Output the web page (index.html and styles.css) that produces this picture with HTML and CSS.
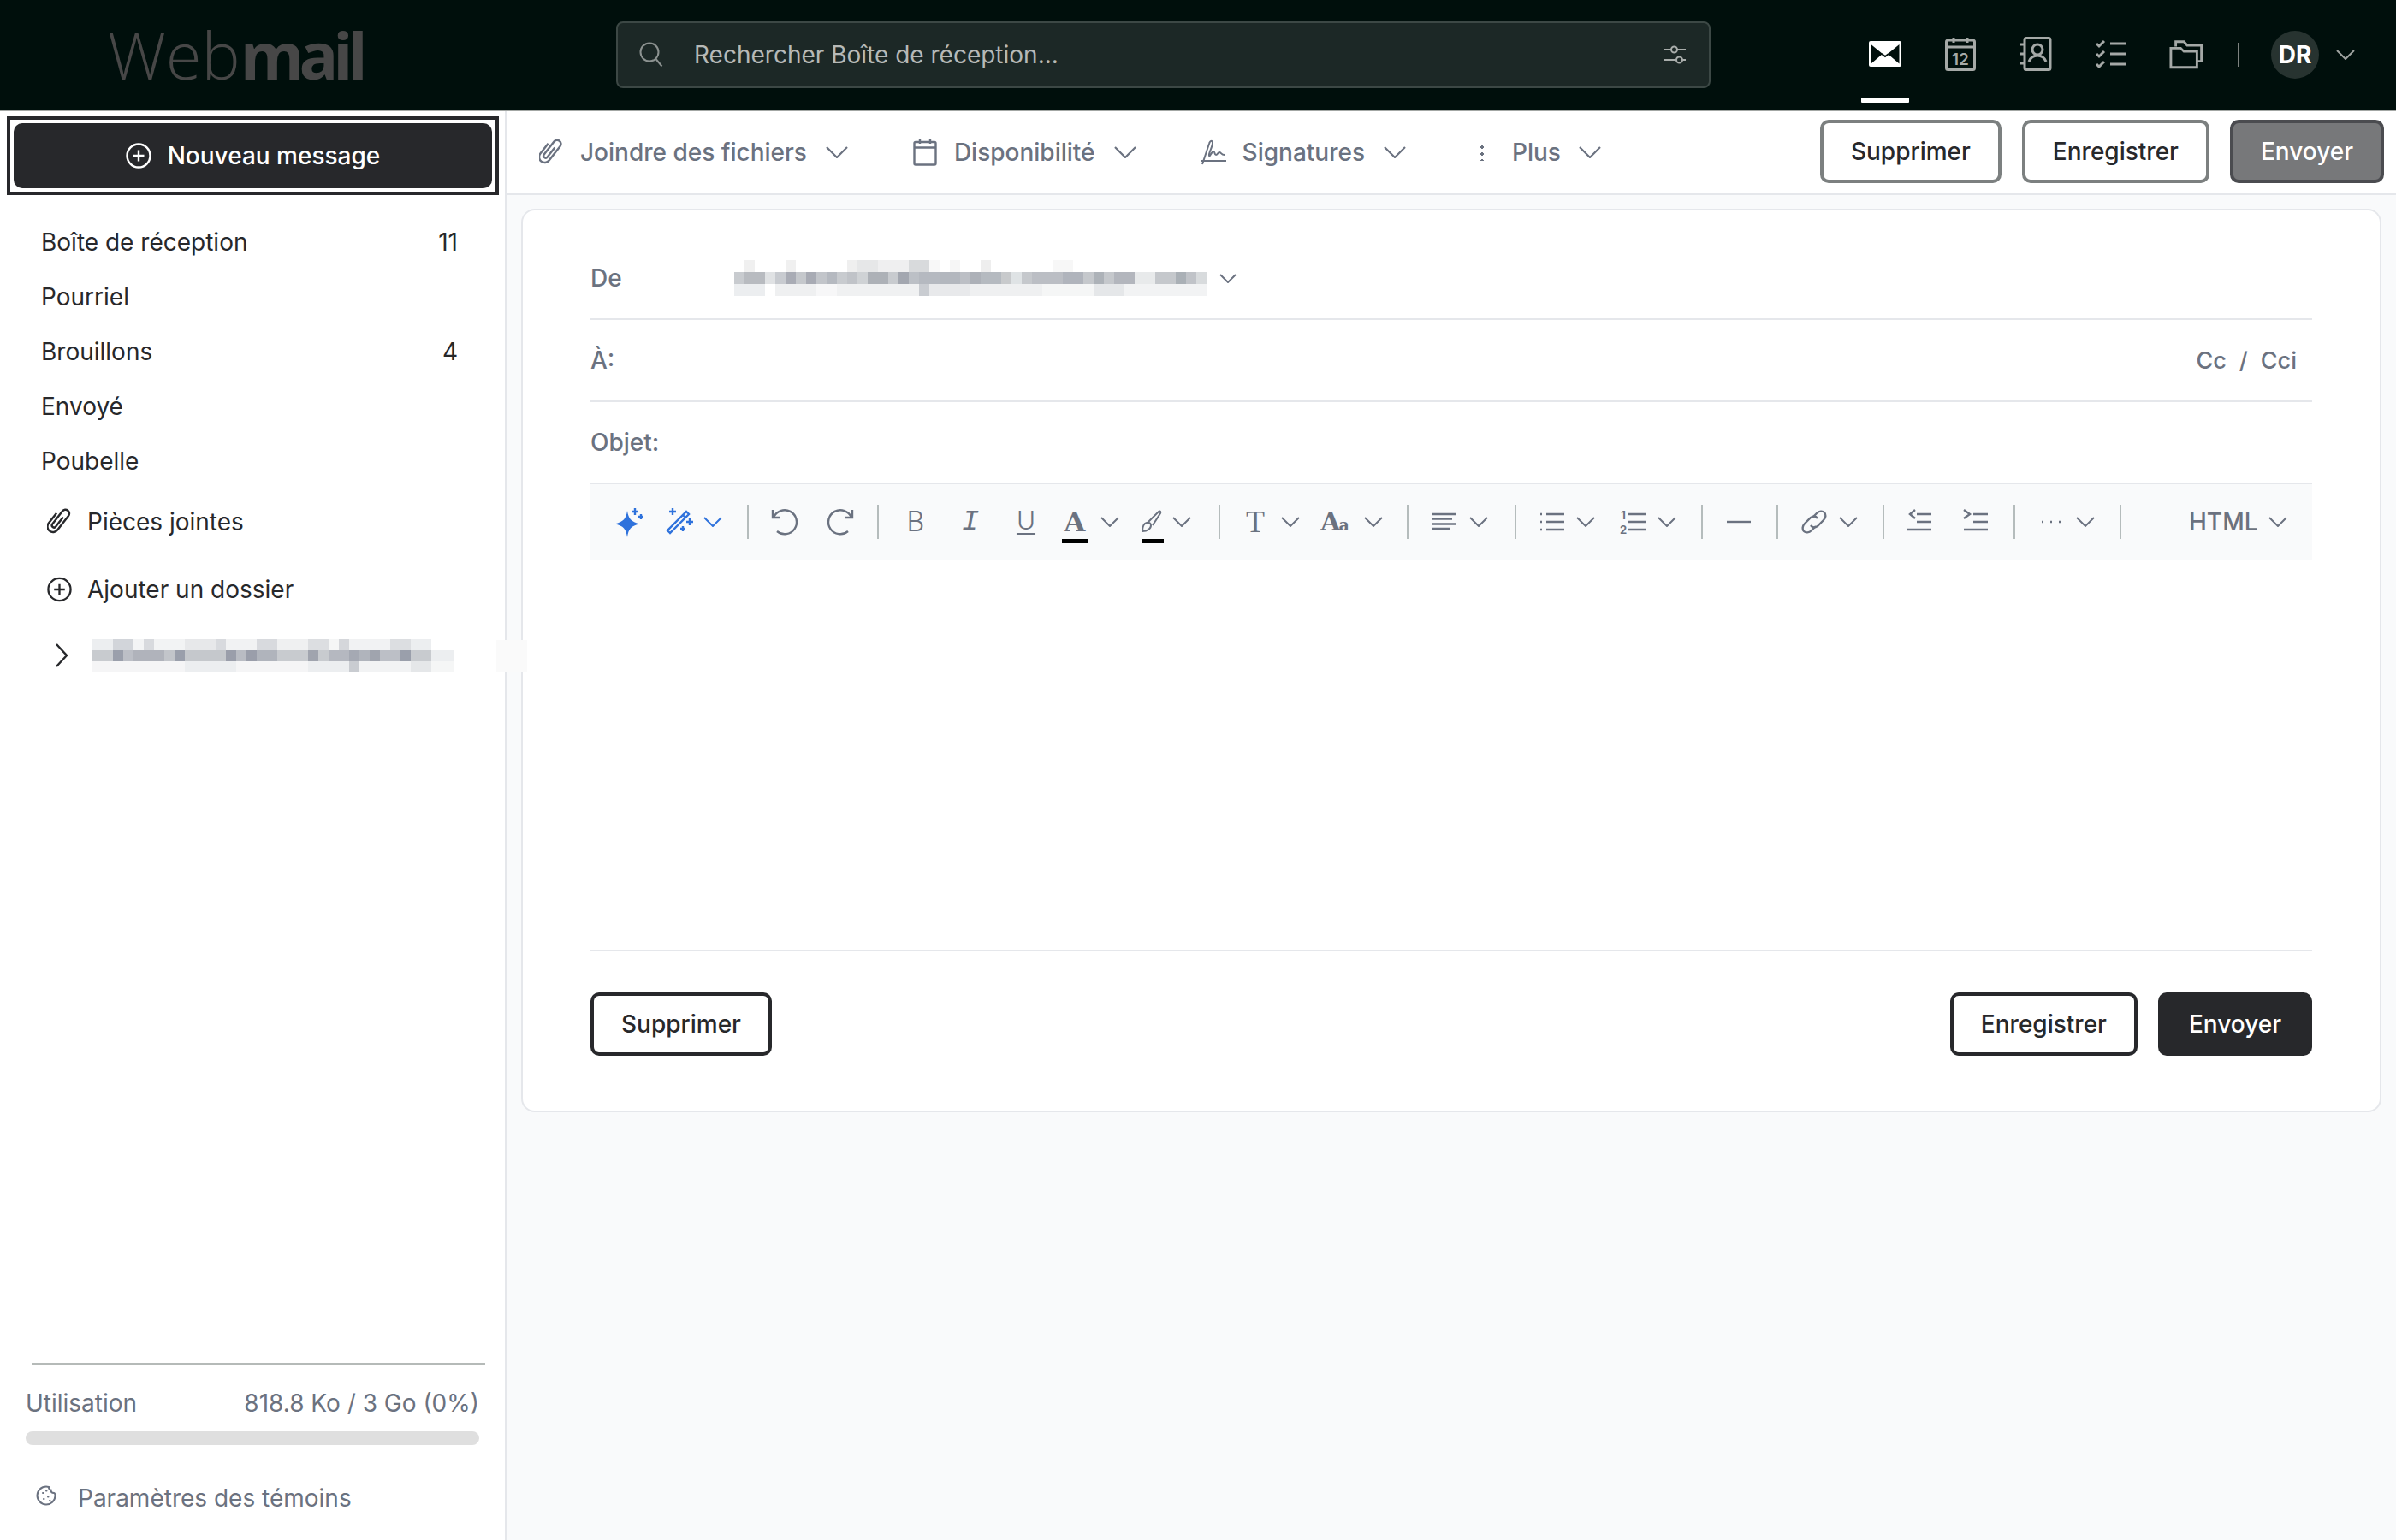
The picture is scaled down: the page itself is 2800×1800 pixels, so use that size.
FILE: index.html
```html
<!DOCTYPE html>
<html lang="fr">
<head>
  <meta charset="UTF-8">
  <meta name="viewport" content="width=device-width, initial-scale=1.0">
  <title>Webmail</title>
  <link rel="stylesheet" href="styles.css">
</head>
<body>
  <!-- Barre du haut -->
  <header class="topbar">
    <div class="logo">Web<b>mail</b></div>
    <div class="search">
      <svg class="search-ico" width="30" height="30" viewBox="0 0 30 30"><circle cx="13" cy="12" r="10.500"/><path d="M20.500 20l7 8.500"/></svg>
      <span class="search-text">Rechercher Boîte de réception...</span>
      <svg class="filter-ico" width="28" height="24" viewBox="0 0 28 24"><path d="M1 6h9M17 6h10M1 18h15M23 18h4"/><circle cx="13.500" cy="6" r="3.500"/><circle cx="19.500" cy="18" r="3.500"/></svg>
    </div>
    <nav class="apps">
      <div class="app app-active">
        <svg width="38" height="30" viewBox="0 0 38 30"><rect width="38" height="30" rx="2" fill="#fff"/><path d="M2.500 4L16 15 2.500 26.500zM35.500 4L22 15l13.500 11.500z" fill="#000f0c"/><path d="M15 15l4 3 4-3" fill="none" stroke="#000f0c" stroke-width="2"/></svg>
      </div>
      <div class="app">
        <svg width="36" height="40" viewBox="0 0 36 40"><rect x="1.500" y="4" width="33" height="34.500" rx="2"/><path d="M1.500 12h33M10 1v6M26 1v6"/><text x="18" y="33" text-anchor="middle" class="cal-num">12</text></svg>
      </div>
      <div class="app">
        <svg width="38" height="40" viewBox="0 0 38 40"><rect x="6" y="1.500" width="30" height="37" rx="2"/><path d="M1 9h6M1 20h6M1 31h6"/><circle cx="21" cy="15" r="6"/><path d="M11 29c2-5 6-7 10-7s8 2 10 7"/></svg>
      </div>
      <div class="app">
        <svg width="36" height="34" viewBox="0 0 36 34"><path d="M1 5l3 3 6-6M1 17l3 3 6-6M1 29l3 3 6-6M17 5h19M17 17h19M17 29h19"/></svg>
      </div>
      <div class="app">
        <svg width="40" height="36" viewBox="0 0 42 36"><path d="M34 27h5.500V7.500H22L18 3H8v6"/><path d="M2 11h12l4 4h16v19.500H2z"/></svg>
      </div>
    </nav>
    <span class="top-sep"></span>
    <div class="avatar">DR</div>
    <svg class="chev chev-top" width="22" height="12" viewBox="0 0 22 12"><path d="M1 1l10 10L21 1"/></svg>
  </header>

  <div class="layout">
    <!-- Colonne de gauche -->
    <aside class="sidebar">
      <div class="compose-frame">
        <button class="compose">
          <svg class="ico" width="30" height="30" viewBox="0 0 30 30"><circle cx="15" cy="15" r="13.500"/><path d="M15 8.500v13M8.500 15h13"/></svg>
          Nouveau message
        </button>
      </div>
      <ul class="folders">
        <li class="folder"><span>Boîte de réception</span><span>11</span></li>
        <li class="folder"><span>Pourriel</span></li>
        <li class="folder"><span>Brouillons</span><span>4</span></li>
        <li class="folder"><span>Envoyé</span></li>
        <li class="folder"><span>Poubelle</span></li>
      </ul>
      <div class="side-link">
        <svg class="ico" width="29" height="36" viewBox="0 0 28 36"><path transform="rotate(38 14 18)" d="M14 11v14a2.500 2.500 0 0 1-5 0V6a4.500 4.500 0 0 1 9 0v21a6.500 6.500 0 0 1-13 0V12"/></svg>
        <span>Pièces jointes</span>
      </div>
      <div class="side-link side-link-add">
        <svg class="ico" width="29" height="30" viewBox="0 0 30 30"><circle cx="15" cy="15" r="13.500"/><path d="M15 8.500v13M8.500 15h13"/></svg>
        <span>Ajouter un dossier</span>
      </div>
      <div class="account">
        <svg class="ico" width="16" height="28" viewBox="0 0 16 28"><path d="M2 1l12 13L2 27"/></svg>
        <span class="mosaic mosaic-account"></span>
        <span class="mosaic-tail"></span>
      </div>

      <div class="side-foot">
        <div class="foot-line"></div>
        <div class="usage"><span>Utilisation</span><span>818.8 Ko / 3 Go (0%)</span></div>
        <div class="usage-bar"></div>
        <div class="cookies">
          <svg class="ico ico-cookie" width="24" height="24" viewBox="0 0 24 24"><path d="M12 1.500c1 0 2 .2 3 .5-.3 2 1 3.500 2.500 3.500 0 2 1.500 3.500 3.500 3.500.8 0 1.500 1 1.500 3.500A10.500 10.500 0 1 1 12 1.500z"/><path d="M8 9h.5M9 16h.5M14 13.500h.5M16 18h.5M12 6.500h.5"/></svg>
          <span>Paramètres des témoins</span>
        </div>
      </div>
    </aside>

    <!-- Contenu -->
    <main class="main">
      <div class="actions">
        <div class="action action-first">
          <svg class="ico" width="28" height="36" viewBox="0 0 28 36"><path transform="rotate(38 14 18)" d="M14 11v14a2.500 2.500 0 0 1-5 0V6a4.500 4.500 0 0 1 9 0v21a6.500 6.500 0 0 1-13 0V12"/></svg>
          <span>Joindre des fichiers</span>
          <svg class="chev chev-action" width="26" height="14" viewBox="0 0 26 14"><path d="M1 1l12 12L25 1"/></svg>
        </div>
        <div class="action">
          <svg class="ico" width="28" height="32" viewBox="0 0 28 32"><rect x="1.500" y="4" width="25" height="26.500" rx="1.500"/><path d="M1.500 10.500h25M8 1v5M20 1v5"/></svg>
          <span>Disponibilité</span>
          <svg class="chev chev-action" width="26" height="14" viewBox="0 0 26 14"><path d="M1 1l12 12L25 1"/></svg>
        </div>
        <div class="action action-sign">
          <svg class="ico ico-sign" width="32" height="30" viewBox="0 0 32 30"><path d="M1 25h30M3 29c3-9 6-18 8-24 1-4 4-4 4-1 0 5-5 12-4 15 .7 2 3-5 5-5s1 4 3 4 2-3 4-3 2 3 6 3"/></svg>
          <span>Signatures</span>
          <svg class="chev chev-action" width="26" height="14" viewBox="0 0 26 14"><path d="M1 1l12 12L25 1"/></svg>
        </div>
        <div class="action action-more">
          <span class="kebab"></span>
          <span>Plus</span>
          <svg class="chev chev-action" width="26" height="14" viewBox="0 0 26 14"><path d="M1 1l12 12L25 1"/></svg>
        </div>
        <div class="action-btns">
          <button class="btn btn-off">Supprimer</button>
          <button class="btn btn-off">Enregistrer</button>
          <button class="btn btn-send-off">Envoyer</button>
        </div>
      </div>

      <section class="card">
        <div class="row">
          <label class="row-label row-label-from">De</label>
          <span class="mosaic mosaic-from"></span>
          <svg class="chev chev-from" width="20" height="11" viewBox="0 0 20 11"><path d="M1 1l9 9 9-9"/></svg>
        </div>
        <div class="row">
          <label class="row-label">À:</label>
          <span class="cc">Cc<i>/</i>Cci</span>
        </div>
        <div class="row row-last">
          <label class="row-label">Objet:</label>
        </div>

        <!-- Barre de l'éditeur -->
        <div class="editor-bar">
          <svg class="tool ml-25 blue-fill" width="40" height="40" viewBox="0 0 40 40"><path d="M18 7c1.500 9 4 13 15 15.500-11 2-13.500 6-15 15.500-1.500-9.500-4-13.500-15-15.500C14 20 16.500 16 18 7z"/><path class="blue-line" d="M27 4v8M23 8h8M34 11v6M31 14h6"/></svg>
          <svg class="tool ml-20 blue-line" width="40" height="40" viewBox="0 0 40 40"><path d="M8 33l-3-3L27 8l3 3zM23 12l3 3M11 4v8M7 8h8M31 16v8M27 20h8M23 25v6M20 28h6"/></svg>
          <svg class="chev chev-tool chev-blue ml-7" width="22" height="12" viewBox="0 0 22 12"><path d="M1 1l10 10L21 1"/></svg>
          <span class="sep ml-29"></span>

          <svg class="tool ml-21 stroke" width="40" height="40" viewBox="0 0 40 40"><path d="M8 15a14 14 0 1 1 4 16"/><path d="M7 6v9h9"/></svg>
          <svg class="tool ml-27 stroke" width="40" height="40" viewBox="0 0 40 40"><path d="M32 15a14 14 0 1 0-4 16"/><path d="M33 6v9h-9"/></svg>
          <span class="sep ml-22"></span>

          <span class="tool glyph glyph-b ml-23">B</span>
          <span class="tool glyph glyph-i ml-24">I</span>
          <span class="tool glyph glyph-u ml-25">U</span>
          <span class="tool glyph glyph-a swatch ml-17">A</span>
          <svg class="chev chev-tool ml-10" width="22" height="12" viewBox="0 0 22 12"><path d="M1 1l10 10L21 1"/></svg>
          <span class="tool swatch swatch-brush ml-20">
            <svg class="stroke stroke-thin" width="40" height="40" viewBox="0 0 40 40"><path d="M7 31c0-4 1-9 5-10 3-1 5 1 5 3 0 4-4 7-10 7zM14 20L26 8c2-1 3 0 2 2L19 24"/></svg>
          </span>
          <svg class="chev chev-tool ml-2" width="22" height="12" viewBox="0 0 22 12"><path d="M1 1l10 10L21 1"/></svg>
          <span class="sep ml-32"></span>

          <span class="tool glyph glyph-t ml-21">T</span>
          <svg class="chev chev-tool ml-10" width="22" height="12" viewBox="0 0 22 12"><path d="M1 1l10 10L21 1"/></svg>
          <span class="tool glyph glyph-aa ml-20">A<small>a</small></span>
          <svg class="chev chev-tool ml-15" width="22" height="12" viewBox="0 0 22 12"><path d="M1 1l10 10L21 1"/></svg>
          <span class="sep ml-28"></span>

          <svg class="tool ml-22 stroke" width="40" height="40" viewBox="0 0 40 40"><path d="M6 11h27M6 16.500h23M6 22.500h27M6 28h21"/></svg>
          <svg class="chev chev-tool ml-9" width="22" height="12" viewBox="0 0 22 12"><path d="M1 1l10 10L21 1"/></svg>
          <span class="sep ml-31"></span>

          <svg class="tool ml-22 stroke" width="40" height="40" viewBox="0 0 40 40"><path d="M13 11h21M13 20h21M13 29h21M6 11h2M6 20h2M6 29h2"/></svg>
          <svg class="chev chev-tool ml-8" width="22" height="12" viewBox="0 0 22 12"><path d="M1 1l10 10L21 1"/></svg>
          <svg class="tool ml-24 stroke" width="40" height="40" viewBox="0 0 40 40"><path d="M15 11h20M15 20h20M15 29h20"/><text x="9" y="17" class="ol-num" text-anchor="middle">1</text><text x="9" y="34" class="ol-num" text-anchor="middle">2</text></svg>
          <svg class="chev chev-tool ml-9" width="22" height="12" viewBox="0 0 22 12"><path d="M1 1l10 10L21 1"/></svg>
          <span class="sep ml-29"></span>

          <svg class="tool ml-22 stroke" width="40" height="40" viewBox="0 0 40 40"><path d="M6 20h28"/></svg>
          <span class="sep ml-24"></span>

          <svg class="tool ml-22 stroke" width="40" height="40" viewBox="0 0 40 40"><path d="M18 15l5-5c3-3 7-3 9-1s2 6-1 9l-7 7c-3 2-6 2-8-1"/><path d="M22 25l-5 5c-3 3-7 3-9 1s-2-6 1-9l7-7c3-2 6-2 8 1"/></svg>
          <svg class="chev chev-tool ml-9" width="22" height="12" viewBox="0 0 22 12"><path d="M1 1l10 10L21 1"/></svg>
          <span class="sep ml-29"></span>

          <svg class="tool ml-21 stroke" width="40" height="40" viewBox="0 0 40 40"><path d="M15 6l-6 5 6 5M17 11h17M17 20h17M6 29h28"/></svg>
          <svg class="tool ml-26 stroke" width="40" height="40" viewBox="0 0 40 40"><path d="M6 6l7 5-7 5M17 11h17M17 20h17M6 29h28"/></svg>
          <span class="sep ml-24"></span>

          <svg class="tool ml-22 stroke" width="40" height="40" viewBox="0 0 40 40"><path d="M9 20h2M19 20h2M29 20h2"/></svg>
          <svg class="chev chev-tool ml-9" width="22" height="12" viewBox="0 0 22 12"><path d="M1 1l10 10L21 1"/></svg>
          <span class="sep ml-29"></span>

          <span class="html-switch">HTML</span>
          <svg class="chev chev-tool ml-12" width="22" height="12" viewBox="0 0 22 12"><path d="M1 1l10 10L21 1"/></svg>
        </div>

        <div class="editor"></div>

        <div class="card-foot">
          <button class="btn">Supprimer</button>
          <div class="card-foot-right">
            <button class="btn">Enregistrer</button>
            <button class="btn btn-send">Envoyer</button>
          </div>
        </div>
      </section>
    </main>
  </div>
</body>
</html>
```

FILE: styles.css
```css
/* Base */
* { box-sizing: border-box; margin: 0; padding: 0; }
html, body { height: 100%; }
body {
  font-family: "Inter", "Liberation Sans", sans-serif;
  font-size: 28px; color: #27282b; background: #f9fafb;
  overflow: hidden;
}
ul { list-style: none; }
button { font: inherit; cursor: pointer; }

.ico { fill: none; stroke: currentColor; stroke-width: 2.4; flex: none; }
.ico-cookie { stroke-width: 2; stroke-linecap: round; margin-top: -7px; }
.chev { fill: none; stroke: currentColor; stroke-width: 2; flex: none; }

/* Barre du haut */
.topbar {
  height: 130px; background: #000f0c;
  border-bottom: 2px solid #a3a7a4;
  display: flex; align-items: center;
  position: relative;
}
.logo {
  width: 720px; padding-left: 126px;
  font-family: "Open Sans", sans-serif;
  font-size: 76px; font-weight: 300; letter-spacing: 0;
  color: #474747; line-height: 1;
}
.logo b { font-weight: 700; letter-spacing: -6px; }
.search {
  width: 1279px; height: 78px;
  background: #1c2826; border: 2px solid #3c4845; border-radius: 8px;
  display: flex; align-items: center; padding: 0 26px 0 24px;
  color: #b6b9b7;
}
.search-ico { fill: none; stroke: #8c9290; stroke-width: 2; flex: none; }
.search-text { margin-left: 35px; flex: 1; font-size: 28px; }
.filter-ico { fill: none; stroke: #a9adab; stroke-width: 2; flex: none; }

.apps { display: flex; align-items: center; margin-left: 176px; height: 100%; }
.app {
  width: 88px; height: 100%;
  display: flex; align-items: center; justify-content: center;
  padding-bottom: 2px;
  position: relative;
}
.app svg { fill: none; stroke: #a5a9a7; stroke-width: 3; }
.app .cal-num {
  font-family: "Inter", sans-serif; font-size: 19px; font-weight: 600;
  fill: #a5a9a7; stroke: none;
}
.app-active { width: 56px; margin-right: 16px; }
.app-active svg { stroke: none; }
.app-active::after {
  content: ""; position: absolute; left: 0; right: 0; bottom: 8px;
  height: 6px; background: #fff; border-radius: 1px;
}
.top-sep { width: 2px; height: 28px; background: #7d8280; margin-left: 16px; }
.avatar {
  width: 56px; height: 56px; border-radius: 50%; margin-left: 37px;
  background: #273330; color: #fff;
  font-weight: 700; font-size: 28px;
  display: flex; align-items: center; justify-content: center;
}
.chev-top { color: #9fa3a1; margin-left: 20px; }

/* Mise en page */
.layout { display: flex; height: 1670px; }

/* Colonne de gauche */
.sidebar {
  width: 592px; flex: none; height: 100%;
  background: #fff; border-right: 2px solid #e5e7eb;
  display: flex; flex-direction: column;
}
.compose-frame {
  width: 575px; height: 92px; margin: 6px 0 0 8px;
  border: 4px solid #27282b; padding: 4px;
}
.compose {
  width: 100%; height: 100%;
  background: #27282b; color: #fff; border: none; border-radius: 10px;
  font-weight: 500;
  display: flex; align-items: center; justify-content: center; gap: 19px;
}
.folders { margin-top: 23px; }
.folder {
  height: 64px; padding: 0 55px 0 48px;
  display: flex; align-items: center; justify-content: space-between;
}
.side-link {
  height: 78px; padding-left: 55px;
  display: flex; align-items: center; gap: 18px;
}
.side-link-add { height: 79px; }
.account {
  height: 76px; padding-left: 64px;
  display: flex; align-items: center; gap: 28px;
  position: relative;
}

/* Texte flouté */
.mosaic { display: block; flex: none; background-repeat: no-repeat; }
.mosaic-account {
  width: 423px; height: 38px;
  background-size: 100% 13px;
  background-position: 0 0, 0 13px, 0 25px;
  background-image:
    linear-gradient(90deg, #eceef0 0 24px, #d2d5da 24px 48px, #f3f4f5 48px 60px, #d8dade 60px 72px, #f2f3f4 72px 108px, #e7e8ea 108px 144px, #d8dade 144px 156px, #f1f2f3 156px 192px, #d8dade 192px 216px, #eff0f1 216px 252px, #dcdee1 252px 276px, #f5f6f6 276px 288px, #d5d7db 288px 300px, #f1f2f3 300px 348px, #dcdee1 348px 372px, #eceef0 372px 396px, transparent 396px),
    linear-gradient(90deg, #c8cbcf 0 24px, #9a9fab 24px 36px, #bcbfc6 36px 48px, #b0b3bb 48px 84px, #c2c5ca 84px 96px, #9a9fab 96px 108px, #c5c8cc 108px 156px, #9a9eaa 156px 168px, #b9bcc3 168px 180px, #9a9eaa 180px 192px, #b0b4bc 192px 216px, #c8cbcf 216px 252px, #a0a4ae 252px 264px, #c8cbcf 264px 276px, #b5b8c0 276px 300px, #a5a9b3 300px 312px, #b0b4bc 312px 324px, #a0a4ae 324px 336px, #bcbfc6 336px 360px, #9a9fab 360px 372px, #c8cbcf 372px 396px, #eceef0 396px 423px),
    linear-gradient(90deg, #f5f5f6 0 108px, #eceef0 108px 168px, #f5f5f6 168px 252px, #eceef0 252px 300px, #c9ccd1 300px 312px, #f2f3f4 312px 372px, #e5e7e9 372px 396px, #f5f6f6 396px 423px);
}
.mosaic-tail {
  position: absolute; left: 580px; top: 20px; z-index: 2;
  width: 36px; height: 38px; background: #fafafa;
}
.mosaic-from {
  width: 552px; height: 42px;
  background-size: 100% 14px;
  background-position: 0 0, 0 14px, 0 28px;
  background-image:
    linear-gradient(90deg, transparent 0 12px, #f0f0f0 12px 24px, transparent 24px 60px, #f0f0f0 60px 72px, transparent 72px 132px, #efefef 132px 144px, #e6e7e8 144px 168px, #efeff0 168px 204px, #d8dadc 204px 228px, #f8f8f8 228px 240px, transparent 240px 252px, #f6f6f6 252px 264px, transparent 264px 288px, #eee 288px 300px, transparent 300px 372px, #f7f7f7 372px 396px, transparent 396px),
    linear-gradient(90deg, #c8cbcf 0 12px, #b8bbc0 12px 36px, #e0e2e4 36px 48px, #c8cbd0 48px 60px, #a9acb5 60px 72px, #c5c8cc 72px 84px, #a8abb4 84px 96px, #c2c5ca 96px 108px, #b5b9c0 108px 120px, #c8cbcf 120px 132px, #c0c3c8 132px 144px, #cfd2d5 144px 156px, #adb1b7 156px 180px, #c8cbcf 180px 192px, #a3a7b0 192px 204px, #bcc0c6 204px 216px, #b5b9c0 216px 240px, #b3b7be 240px 264px, #bcbfc5 264px 276px, #adb1b8 276px 288px, #b5bac0 288px 312px, #c8cacc 312px 324px, #dfe3e5 324px 336px, #c5c8cc 336px 348px, #bbbec4 348px 384px, #b0b4bc 384px 408px, #c5c8cc 408px 420px, #adb2b8 420px 432px, #c5c8cc 432px 444px, #b3b6bd 444px 468px, #e8eaeb 468px 492px, #c5c8cc 492px 516px, #aab0b6 516px 528px, #c0c3c8 528px 540px, #d8dbdd 540px 552px),
    linear-gradient(90deg, #eceef0 0 36px, #fff 36px 48px, #eff0f1 48px 96px, #f7f7f8 96px 120px, #f0f1f2 120px 216px, #c9ccd1 216px 228px, #e8e9eb 228px 276px, #eff0f1 276px 360px, #f5f6f6 360px 420px, #e5e7e9 420px 456px, #f2f3f4 456px 552px);
}

.side-foot { margin-top: auto; padding: 0 30px 32px; }
.foot-line { height: 2px; background: #b5bab8; margin: 0 -7px 0 7px; }
.usage {
  margin-top: 28px; height: 34px; color: #6b7280;
  display: flex; align-items: center; justify-content: space-between;
}
.usage-bar { height: 16px; margin-top: 16px; background: #dfdfdf; border-radius: 8px; }
.cookies {
  margin-top: 45px; height: 34px; padding-left: 12px; color: #6b7280;
  display: flex; align-items: center; gap: 25px;
}

/* Contenu */
.main { flex: 1; min-width: 0; }
.actions {
  height: 98px; background: #fff; border-bottom: 2px solid #e5e7eb;
  display: flex; align-items: center;
  padding-right: 14px; color: #6b7280; font-weight: 500;
}
.action { display: flex; align-items: center; gap: 20px; margin-left: 76px; }
.action-first { margin-left: 38px; }
.action-sign { margin-left: 74px; }
.action-more { margin-left: 87px; gap: 33px; }
.chev-action { stroke-width: 2.2; margin-left: 2px; }
.action-more .chev-action { margin-left: -12px; }
.ico-sign { margin-right: -2px; stroke-width: 2; }
.kebab {
  width: 4px; height: 20px;
  background: radial-gradient(circle, #6b7280 2px, transparent 2px) 0 0 / 4px 8px;
}
.action-btns { margin-left: auto; display: flex; gap: 24px; margin-top: -3px; }

.btn {
  height: 74px; padding: 0 32px;
  background: #fff; color: #27282b; font-weight: 500;
  border: 4px solid #27282b; border-radius: 10px;
}
.btn-off { border-color: #7c8080; }
.btn-send-off { background: #77787a; border-color: #4b4c50; color: #fff; }
.btn-send { background: #27282b; color: #fff; }

.card {
  margin: 16px 17px 0 17px;
  height: 1056px; background: #fff;
  border: 2px solid #e5e7eb; border-radius: 16px;
  padding: 32px 79px 0;
}
.row {
  height: 96px; border-bottom: 2px solid #e5e7eb;
  display: flex; align-items: center;
}
.row-last { border-bottom: none; height: 94px; }
.row-label { color: #6b7280; font-weight: 500; }
.row-label-from { width: 168px; }
.chev-from { margin-left: 15px; color: #6b7280; }
.cc {
  margin-left: auto; margin-right: 18px; color: #6b7280; font-weight: 500; font-size: 27px;
}
.cc i { font-style: normal; margin: 0 15px; }

/* Barre de l'éditeur */
.editor-bar {
  height: 90px; background: #f9fafb; border-top: 2px solid #e5e7eb;
  display: flex; align-items: center; color: #6b7280;
}
.tool { width: 40px; height: 40px; flex: none; display: block; position: relative; }
.stroke { fill: none; stroke: #6b7280; stroke-width: 2.4; }
.stroke-thin { stroke-width: 2; }
.blue-fill { fill: #2f72dc; }
.blue-line { fill: none; stroke: #2f72dc; stroke-width: 2.4; }
.chev-tool { color: #6b7280; }
.chev-blue { color: #2f72dc; }
.sep { width: 2px; height: 40px; background: #b5bcbc; flex: none; }
.ol-num { font-family: "Inter", sans-serif; font-size: 13px; font-weight: 700; fill: #6b7280; stroke: none; }

.glyph { text-align: center; line-height: 40px; color: #6b7280; }
.glyph-b { font-weight: 300; font-size: 32px; }
.glyph-i { font-family: "Liberation Mono", monospace; font-style: italic; font-size: 34px; }
.glyph-u { font-weight: 300; font-size: 30px; line-height: 36px; text-decoration: underline; text-underline-offset: 4px; text-decoration-thickness: 2px; }
.glyph-a { font-family: "DejaVu Serif", serif; font-weight: 700; font-size: 32px; }
.glyph-t { font-family: "Liberation Serif", serif; font-size: 36px; font-weight: 400; }
.glyph-aa { font-family: "DejaVu Serif", serif; font-weight: 700; font-size: 30px; letter-spacing: -2px; white-space: nowrap; }
.glyph-aa small { font-size: 19px; }

.swatch::after {
  content: ""; position: absolute; left: 5px; top: 40px;
  width: 30px; height: 5px; background: #000;
}
.swatch-brush::after { left: 6px; width: 26px; }

.html-switch { margin-left: 79px; font-weight: 500; font-size: 28px; }

.ml-2 { margin-left: 2px; }
.ml-7 { margin-left: 7px; }
.ml-8 { margin-left: 8px; }
.ml-9 { margin-left: 9px; }
.ml-10 { margin-left: 10px; }
.ml-12 { margin-left: 12px; }
.ml-15 { margin-left: 15px; }
.ml-17 { margin-left: 17px; }
.ml-20 { margin-left: 20px; }
.ml-21 { margin-left: 21px; }
.ml-22 { margin-left: 22px; }
.ml-23 { margin-left: 23px; }
.ml-24 { margin-left: 24px; }
.ml-25 { margin-left: 25px; }
.ml-26 { margin-left: 26px; }
.ml-27 { margin-left: 27px; }
.ml-28 { margin-left: 28px; }
.ml-29 { margin-left: 29px; }
.ml-31 { margin-left: 31px; }
.ml-32 { margin-left: 32px; }

.editor { height: 458px; border-bottom: 2px solid #e5e7eb; }
.card-foot {
  margin-top: 48px;
  display: flex; justify-content: space-between;
}
.card-foot-right { display: flex; gap: 24px; }
```
